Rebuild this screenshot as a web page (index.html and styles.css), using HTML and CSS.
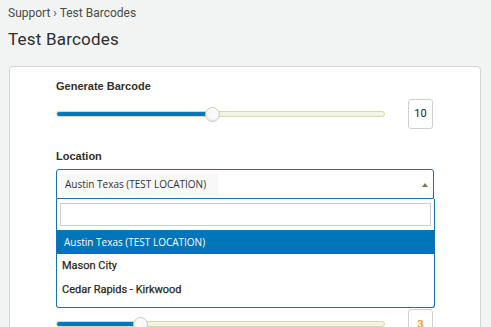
FILE: index.html
```html
<!DOCTYPE html>
<html>
<head>
	<meta charset="utf-8" />
	<title>Test Barcodes</title>
	<link rel="stylesheet" href="styles.css">
</head>
<body>
	<div class="crumb">Support › Test Barcodes</div>
	<h1 class="title">Test Barcodes</h1>

	<div class="card">
		<div class="field">
			<label class="lbl">Generate Barcode</label>
			<div class="row">
				<div class="track"><div class="fill" style="width:47.5%"></div><span class="knob" style="left:47.5%"></span></div>
				<div class="num">10</div>
			</div>
		</div>

		<div class="field">
			<label class="lbl">Location</label>
			<div class="select open">
				<span class="chosen">Austin Texas (TEST LOCATION)</span>
				<span class="arrow"></span>
				<div class="drop">
					<div class="search"><input type="text"></div>
					<ul class="opts">
						<li class="opt hl">Austin Texas (TEST LOCATION)</li>
						<li class="opt">Mason City</li>
						<li class="opt">Cedar Rapids - Kirkwood</li>
					</ul>
				</div>
			</div>
		</div>

		<div class="field">
			<label class="lbl">Printer</label>
			<div class="row">
				<div class="track"><div class="fill" style="width:50%"></div><span class="knob" style="left:50%"></span></div>
				<div class="num">5</div>
			</div>
		</div>

		<div class="field">
			<label class="lbl">Copies</label>
			<div class="row">
				<div class="track"><div class="fill" style="width:25.5%"></div><span class="knob" style="left:25.5%"></span></div>
				<div class="num warn">3</div>
			</div>
		</div>
	</div>
</body>
</html>
```

FILE: styles.css
```css
* { margin:0; padding:0; box-sizing:border-box; }
body { background:#f1f4f3; font-family:Roboto, "Liberation Sans", sans-serif; color:#333; overflow:hidden; }

.crumb { font-size:12px; color:#4a4a4a; padding:6px 0 0 8px; line-height:14px; }
.title { font-size:17px; font-weight:400; color:#2e2e2e; padding:8px 0 0 8px; line-height:22px; letter-spacing:0.2px; }

.card { margin:16px 10px 0 9px; background:#fff; border:1px solid #d2d4d3; border-radius:4px; padding:12px 47px 30px 46px; height:400px; }

.field { margin-bottom:20px; }
.lbl { display:block; font-family:"Liberation Sans", Arial, sans-serif; font-weight:bold; font-size:11px; line-height:14px; color:#33301e; margin-bottom:6px; }

.row { display:flex; align-items:center; gap:23px; height:30px; }
.track { position:relative; width:329px; height:6px; background:#f3f4e4; border:1px solid #d9d6b2; border-radius:3px; }
.fill { height:100%; background:#0078be; border-radius:3px 0 0 3px; }
.knob { position:absolute; top:50%; width:15px; height:15px; margin:-7.5px 0 0 -7.5px; border-radius:50%; background:#f9f9f9; border:1px solid #c9c9c9; box-shadow:inset 0 -1px 2px rgba(0,0,0,0.06); }
.num { width:25px; height:30px; border:1px solid #cfcfcf; border-radius:3px; font-size:11px; line-height:28px; text-align:center; color:#222; }
.num.warn { color:#f0a020; font-weight:bold; line-height:30px; }

.select { position:relative; width:378px; height:30px; border:1px solid #1b6fae; border-radius:3px 3px 0 0; display:flex; align-items:center; padding-left:3px; }
.chosen { background:#f7f8f7; font-family:"Open Sans", sans-serif; font-size:10px; line-height:21px; padding:0 12px 0 5px; color:#333; }
.arrow { position:absolute; right:5px; top:13px; width:0; height:0; border-left:3.5px solid transparent; border-right:3.5px solid transparent; border-bottom:4px solid #7b7452; }

.drop { position:absolute; left:-1px; top:29px; width:379px; height:109px; background:#fff; border:1px solid #1b6fae; border-top:none; border-radius:0 0 3px 3px; z-index:5; }
.search { padding:4px 3px 0 3px; }
.search input { display:block; width:371px; height:23px; border:1px solid #ccc; outline:none; }
.opts { list-style:none; margin-top:4px; }
.opt { height:24px; line-height:24px; padding-left:5px; font-size:11px; font-weight:400; color:#2b2916; -webkit-text-stroke:0.25px #2b2916; }
.opt.hl { background:#0075ba; color:#fff; font-family:"Open Sans", sans-serif; font-weight:400; font-size:10px; padding-left:7px; -webkit-text-stroke:0; }
```
